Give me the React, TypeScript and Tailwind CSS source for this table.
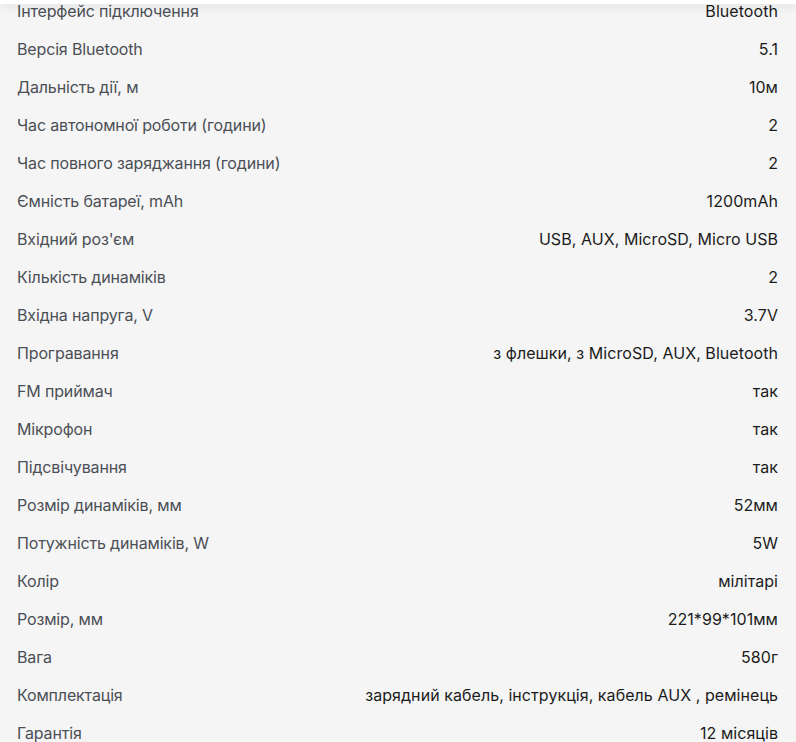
import React from "react";

const rows: [string, string][] = [
  ["Інтерфейс підключення", "Bluetooth"],
  ["Версія Bluetooth", "5.1"],
  ["Дальність дії, м", "10м"],
  ["Час автономної роботи (години)", "2"],
  ["Час повного заряджання (години)", "2"],
  ["Ємність батареї, mAh", "1200mAh"],
  ["Вхідний роз'єм", "USB, AUX, MicroSD, Micro USB"],
  ["Кількість динаміків", "2"],
  ["Вхідна напруга, V", "3.7V"],
  ["Програвання", "з флешки, з MicroSD, AUX, Bluetooth"],
  ["FM приймач", "так"],
  ["Мікрофон", "так"],
  ["Підсвічування", "так"],
  ["Розмір динаміків, мм", "52мм"],
  ["Потужність динаміків, W", "5W"],
  ["Колір", "мілітарі"],
  ["Розмір, мм", "221*99*101мм"],
  ["Вага", "580г"],
  ["Комплектація", "зарядний кабель, інструкція, кабель AUX , ремінець"],
  ["Гарантія", "12 місяців"],
];

export default function App() {
  return (
    <div
      className="relative w-[796px] h-[742px] overflow-hidden bg-[#f5f5f5]"
      style={{ fontFamily: "Inter, 'Noto Sans', sans-serif" }}
    >
      <div className="absolute top-0 left-0 right-0 h-[4px] bg-white shadow-[0_2px_10px_rgba(0,0,0,0.12)] z-10" />
      <div className="flex flex-col -mt-[8px] pl-[17px] pr-[18px]">
        {rows.map(([k, v]) => (
          <div key={k} className="flex h-[38px] items-center justify-between text-[16px]">
            <span className="text-[#4b4f56] tracking-[-0.15px]">{k}</span>
            <span className="text-[#1c1c1c] tracking-[0.06px]">{v}</span>
          </div>
        ))}
      </div>
    </div>
  );
}
